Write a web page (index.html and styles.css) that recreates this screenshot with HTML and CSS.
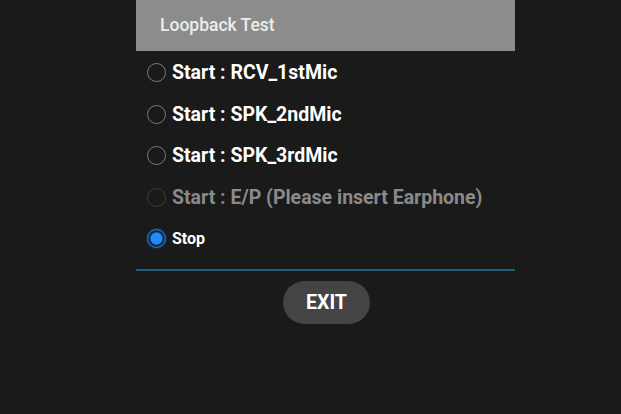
FILE: index.html
```html
<!DOCTYPE html>
<html>
<head>
<meta charset="utf-8">
<link rel="stylesheet" href="styles.css">
</head>
<body>
<div class="panel">
  <div class="header">Loopback Test</div>
  <div class="options">
    <div class="row"><span class="radio"></span><span class="label">Start : RCV_1stMic</span></div>
    <div class="row"><span class="radio"></span><span class="label">Start : SPK_2ndMic</span></div>
    <div class="row"><span class="radio"></span><span class="label">Start : SPK_3rdMic</span></div>
    <div class="row disabled"><span class="radio"></span><span class="label">Start : E/P (Please insert Earphone)</span></div>
    <div class="row checked"><span class="radio"></span><span class="label small">Stop</span></div>
  </div>
  <div class="divider"></div>
  <div class="actions"><button class="exit">EXIT</button></div>
</div>
</body>
</html>
```
FILE: styles.css
```css
html, body {
  margin: 0;
  padding: 0;
  background: #1a1a1a;
  width: 621px;
  height: 414px;
  overflow: hidden;
  font-family: Roboto, "Liberation Sans", sans-serif;
}
.panel {
  margin-left: 136px;
  width: 379px;
  display: flex;
  flex-direction: column;
}
.header {
  height: 51px;
  background: #8c8c8c;
  color: #ececec;
  font-size: 17.5px;
  font-weight: 500;
  display: flex;
  align-items: center;
  padding-left: 24px;
  box-sizing: border-box;
  padding-bottom: 2px;
}
.options {
  display: flex;
  flex-direction: column;
  padding-top: 1px;
}
.row {
  height: 41.5px;
  display: flex;
  align-items: center;
  padding-left: 11px;
  gap: 6px;
}
.radio {
  width: 17px;
  height: 17px;
  border: 1.6px solid #7a7a7a;
  border-radius: 50%;
  box-sizing: content-box;
  flex: none;
}
.label {
  color: #ffffff;
  font-size: 19.5px;
  font-weight: 700;
}
.label.small {
  font-size: 16px;
}
.row.disabled .radio {
  border-color: #3c3c3c;
}
.row.disabled .label {
  color: #8a8a8a;
}
.row.checked .radio {
  border-color: #2f7fd8;
  background: radial-gradient(circle, #1d8cff 0, #1d8cff 5.5px, #1b2a40 6.5px, #1b2a40 100%);
  box-shadow: 0 0 0 1px #123154;
}
.divider {
  margin-top: 9px;
  height: 2px;
  background: #1f6078;
}
.actions {
  display: flex;
  justify-content: center;
  padding-top: 10px;
  padding-left: 2px;
}
.exit {
  width: 87px;
  height: 43px;
  border: none;
  border-radius: 22px;
  background: #444444;
  color: #ffffff;
  font-family: Roboto, "Liberation Sans", sans-serif;
  font-size: 19.5px;
  font-weight: 700;
  padding: 0;
}
```
